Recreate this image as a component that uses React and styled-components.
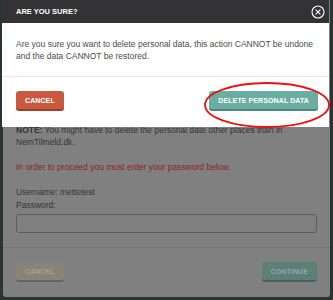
import React from 'react';
import styled, { createGlobalStyle } from 'styled-components';

const GlobalStyle = createGlobalStyle`
  html, body {
    margin: 0;
    padding: 0;
    background: #2a2e2e;
    font-family: "Liberation Sans", Arial, sans-serif;
  }
`;

const Stage = styled.div`
  position: relative;
  width: 333px;
  height: 300px;
  overflow: hidden;
  background: #2b3333;
`;

// the dimmed modal that sits behind the confirm dialog
const BackPanel = styled.div`
  margin-left: 3px;
  width: 327px;
  height: 297px;
  background: #808080;
  border-radius: 0 0 3px 3px;
  display: flex;
  flex-direction: column;
`;

const BackBody = styled.div`
  padding: 124px 13px 0 13px;
  color: #363636;
  font-size: 8.5px;
  line-height: 12px;
`;

const Para = styled.p`
  margin: 0 0 ${(p) => p.$gap ?? 13}px 0;
  color: ${(p) => (p.$warn ? '#8c2424' : 'inherit')};
`;

const FieldInput = styled.div`
  margin-top: 3px;
  height: 17px;
  border: 1px solid #5e5e5e;
  border-radius: 3px;
`;

const BackFooter = styled.div`
  margin-top: 14px;
  border-top: 1px solid #747474;
  padding: 14px 13px 0 13px;
  display: flex;
  justify-content: space-between;
`;

const Button = styled.button`
  height: 20px;
  padding: 0 ${(p) => p.$px || 9}px;
  border: none;
  border-bottom: 2px solid ${(p) => p.$shade};
  border-radius: 3px;
  background: ${(p) => p.$bg};
  color: ${(p) => p.$fg || '#ffffff'};
  font-family: "Liberation Sans", Arial, sans-serif;
  font-weight: bold;
  font-size: 7px;
  letter-spacing: 0.1px;
  cursor: pointer;
`;

const Dialog = styled.div`
  position: absolute;
  top: 0;
  left: 2px;
  width: 327px;
  height: 127px;
  background: #ffffff;
  display: flex;
  flex-direction: column;
`;

const DialogHeader = styled.div`
  height: 23px;
  background: #333335;
  display: flex;
  align-items: center;
  justify-content: space-between;
  padding: 0 4px 0 14px;
`;

const DialogTitle = styled.span`
  color: #ffffff;
  font-weight: bold;
  font-size: 7.5px;
`;

const DialogBody = styled.div`
  padding: 15px 14px 14px 14px;
  color: #4a4a4a;
  font-size: 8.5px;
  line-height: 12px;
  border-bottom: 1px solid #e6e6e6;
`;

const DialogFooter = styled.div`
  padding: 14px 11px 0 14px;
  display: flex;
  justify-content: space-between;
`;

const Ring = styled.svg`
  position: absolute;
  left: 202px;
  top: 81px;
`;

const CloseIcon = () => (
  <svg width="14" height="14" viewBox="0 0 14 14">
    <circle cx="7" cy="7" r="6" fill="none" stroke="#ffffff" strokeWidth="1.1" />
    <path d="M4.6 4.6 L9.4 9.4 M9.4 4.6 L4.6 9.4" stroke="#ffffff" strokeWidth="1.1" />
  </svg>
);

export default function App() {
  return (
    <>
      <GlobalStyle />
      <Stage>
        <BackPanel>
          <BackBody>
            <Para $gap={13}>
              <b>NOTE:</b> You might have to delete the personal date other places than in NemTilmeld.dk.
            </Para>
            <Para $warn $gap={13}>In order to proceed you must enter your password below.</Para>
            <Para $gap={1}>Username: mettetest</Para>
            <Para $gap={0}>Password:</Para>
            <FieldInput />
          </BackBody>
          <BackFooter>
            <Button $bg="#8a8478" $shade="#6a655c" $fg="#a29d93" $px={9}>CANCEL</Button>
            <Button $bg="#5c7f77" $shade="#48635d" $fg="#8fa9a3" $px={9}>CONTINUE</Button>
          </BackFooter>
        </BackPanel>

        <Dialog>
          <DialogHeader>
            <DialogTitle>ARE YOU SURE?</DialogTitle>
            <CloseIcon />
          </DialogHeader>
          <DialogBody>
            Are you sure you want to delete personal data, this action CANNOT be undone and the data CANNOT be restored.
          </DialogBody>
          <DialogFooter>
            <Button $bg="#c95a3f" $shade="#9a432f" $px={9}>CANCEL</Button>
            <Button $bg="#6aaea2" $shade="#4d857b" $px={9}>DELETE PERSONAL DATA</Button>
          </DialogFooter>
        </Dialog>

        <Ring width="130" height="48" viewBox="0 0 130 48">
          <ellipse cx="65" cy="24" rx="62" ry="22" fill="none" stroke="#ee1111" strokeWidth="1.8" />
        </Ring>
      </Stage>
    </>
  );
}
